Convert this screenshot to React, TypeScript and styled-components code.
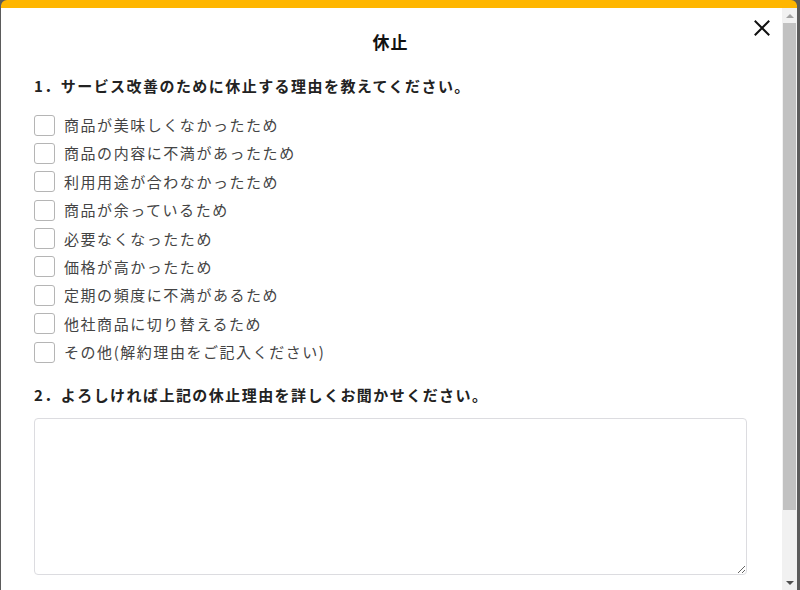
import React from 'react';
import styled, { createGlobalStyle } from 'styled-components';

const GlobalStyle = createGlobalStyle`
  html, body {
    margin: 0;
    padding: 0;
    height: 100%;
    background: #5b5b5b;
    overflow: hidden;
  }
  body {
    font-family: "Noto Sans CJK JP", "Noto Sans", sans-serif;
    color: #333;
  }
`;

const Overlay = styled.div`
  height: 590px;
  padding: 0 3px 0 1px;
  box-sizing: border-box;
`;

const Modal = styled.div`
  height: 590px;
  box-sizing: border-box;
  background: #fff;
  border-top: 8px solid #ffb600;
  border-radius: 6px 6px 0 0;
  display: flex;
  overflow: hidden;
`;

const ScrollArea = styled.div`
  flex: 1;
  min-width: 0;
  overflow: hidden;
  position: relative;
`;

const ScrollTrack = styled.div`
  width: 15px;
  flex-shrink: 0;
  background: #f1f1f1;
  display: flex;
  flex-direction: column;
`;

const ScrollButton = styled.div<{ $down?: boolean }>`
  height: 15px;
  flex-shrink: 0;
  display: flex;
  align-items: center;
  justify-content: center;

  &::before {
    content: '';
    width: 0;
    height: 0;
    border-left: 4px solid transparent;
    border-right: 4px solid transparent;
    ${(p) => (p.$down ? 'border-top: 4px solid #505050;' : 'border-bottom: 4px solid #a3a3a3;')}
  }
`;

const ScrollThumb = styled.div`
  height: 487px;
  margin: 0 1px;
  background: #c1c1c1;
`;

const ScrollSpacer = styled.div`
  flex: 1;
`;

const Body = styled.div`
  padding: 22px 35px 90px 33px;
`;

const Title = styled.h2`
  margin: 0 0 21px;
  text-align: center;
  font-size: 17px;
  font-weight: 700;
  color: #111;
  letter-spacing: 1px;
  line-height: 24px;
`;

const CloseButton = styled.button`
  position: absolute;
  top: 8px;
  right: 8px;
  width: 24px;
  height: 24px;
  padding: 0;
  border: none;
  background: none;
  display: flex;
  align-items: center;
  justify-content: center;
  cursor: pointer;
`;

const Question = styled.h3`
  margin: 0 0 17px;
  font-size: 15px;
  font-weight: 700;
  color: #222;
  letter-spacing: 1.45px;
  line-height: 22px;
`;

const AnswerQuestion = styled(Question)`
  margin-bottom: 12px;
`;

const OptionList = styled.div`
  display: flex;
  flex-direction: column;
  gap: 6.4px;
  margin-bottom: 21px;
`;

const Option = styled.label`
  display: flex;
  align-items: center;
  gap: 9px;
  font-size: 15px;
  line-height: 22px;
  letter-spacing: 1.55px;
  color: #444;
  cursor: pointer;
`;

const Box = styled.span`
  width: 19px;
  height: 19px;
  border: 1px solid #b5b5b5;
  border-radius: 3px;
  background: #fff;
  flex-shrink: 0;
`;

const TextArea = styled.textarea`
  display: block;
  width: 100%;
  height: 157px;
  box-sizing: border-box;
  border: 1px solid #dcdce0;
  border-radius: 4px;
  font: inherit;
  padding: 8px;
  resize: vertical;
`;

const reasons = [
  '商品が美味しくなかったため',
  '商品の内容に不満があったため',
  '利用用途が合わなかったため',
  '商品が余っているため',
  '必要なくなったため',
  '価格が高かったため',
  '定期の頻度に不満があるため',
  '他社商品に切り替えるため',
  'その他(解約理由をご記入ください)',
];

const App: React.FC = () => {
  return (
    <>
      <GlobalStyle />
      <Overlay>
        <Modal>
          <ScrollArea>
            <CloseButton aria-label="閉じる">
              <svg width="16" height="16" viewBox="0 0 16 16">
                <path d="M1.5 1.5 L14.5 14.5 M14.5 1.5 L1.5 14.5" stroke="#111" strokeWidth="2" strokeLinecap="square" />
              </svg>
            </CloseButton>
            <Body>
              <Title>休止</Title>
              <Question>1．サービス改善のために休止する理由を教えてください。</Question>
              <OptionList>
                {reasons.map((reason) => (
                  <Option key={reason}>
                    <Box />
                    {reason}
                  </Option>
                ))}
              </OptionList>
              <AnswerQuestion>2．よろしければ上記の休止理由を詳しくお聞かせください。</AnswerQuestion>
              <TextArea />
            </Body>
          </ScrollArea>
          <ScrollTrack>
            <ScrollButton />
            <ScrollThumb />
            <ScrollSpacer />
            <ScrollButton $down />
          </ScrollTrack>
        </Modal>
      </Overlay>
    </>
  );
};

export default App;
